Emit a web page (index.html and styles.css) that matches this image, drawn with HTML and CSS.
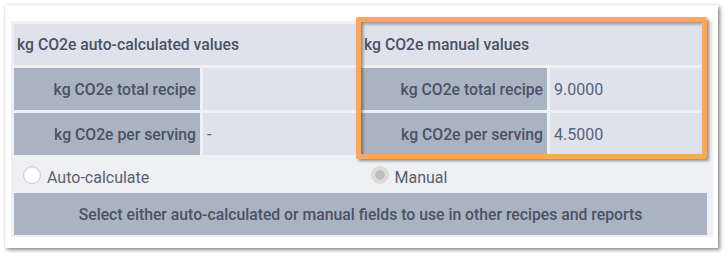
FILE: index.html
```html
<!DOCTYPE html>
<html lang="en">
<head>
    <meta charset="UTF-8">
    <meta name="viewport" content="width=device-width, initial-scale=1.0">
    <title>kg CO2e values</title>
<link rel="stylesheet" href="styles.css">
</head>
<body>

    <div class="card">
        <div class="panel">
            <div class="co2-grid">
                <div class="cell head">kg CO2e auto-calculated values</div>
                <div class="cell head">kg CO2e manual values</div>

                <div class="cell label">kg CO2e total recipe</div>
                <div class="cell value"></div>
                <div class="cell label">kg CO2e total recipe</div>
                <div class="cell value">9.0000</div>

                <div class="cell label">kg CO2e per serving</div>
                <div class="cell value">-</div>
                <div class="cell label">kg CO2e per serving</div>
                <div class="cell value">4.5000</div>
            </div>

            <div class="radio-row">
                <label class="radio-opt">
                    <span class="radio"></span>
                    <span class="radio-text">Auto-calculate</span>
                </label>
                <label class="radio-opt manual">
                    <span class="radio checked"></span>
                    <span class="radio-text">Manual</span>
                </label>
            </div>

            <div class="note-bar">Select either auto-calculated or manual fields to use in other recipes and reports</div>
        </div>

        <!-- highlight round the manual values -->
        <div class="highlight"></div>
    </div>

</body>
</html>
```

FILE: styles.css
```css
/* Reset */
* {
    padding: 0;
    margin: 0;
    box-sizing: border-box;
}

body {
    font-family: Roboto, "Liberation Sans", Arial, sans-serif;
    background-color: #fff;
    color: #4b5264;
}

/* White card with drop shadow */
.card {
    position: relative;
    margin: 5px;
    width: 713px;
    height: 243px;
    padding: 16px 5px 0 6px;
    background-color: #fff;
    box-shadow: 2px 2px 4px rgba(0, 0, 0, 0.45), 0 0 2px rgba(0, 0, 0, 0.12);
}

.panel {
    width: 702px;
    height: 216px;
    padding: 3px 6px 2px 3px;
    background-color: #eff0f4;
}

/* Value table */
.co2-grid {
    display: grid;
    grid-template-columns: 186px 155px 186px 157px;
    grid-template-rows: 41px 42px 42px;
    gap: 3px;
}

.cell {
    display: flex;
    align-items: center;
    font-size: 15.75px;
}

.head {
    grid-column: span 2;
    padding-left: 3px;
    font-weight: 500;
    background-color: #dfe2ea;
}

.label {
    justify-content: flex-end;
    padding-right: 4px;
    font-weight: 500;
    background-color: #aab3c2;
}

.value {
    padding-left: 4px;
    font-size: 16px;
    color: #56617a;
    background-color: #dfe2ea;
}

/* Radio buttons */
.radio-row {
    display: flex;
    height: 38px;
    align-items: center;
}

.radio-opt {
    display: flex;
    align-items: center;
    gap: 6px;
    width: 347px;
    padding-left: 9px;
    padding-top: 2px;
    font-size: 16px;
    color: #59606e;
}

.radio-opt.manual {
    padding-left: 10px;
}

.radio-text {
    padding-top: 5px;
}

.radio {
    width: 18px;
    height: 18px;
    border-radius: 50%;
    border: 1px solid #c9cbd0;
    background-color: #fff;
    box-shadow: inset 0 1px 2px rgba(0, 0, 0, 0.08);
}

.radio.checked {
    border: 3px solid #dcdcdc;
    background-color: #bdbdbd;
    box-shadow: inset 0 0 0 1px #ebebeb;
}

/* Bottom note */
.note-bar {
    display: flex;
    align-items: center;
    justify-content: center;
    height: 42px;
    font-size: 15.75px;
    font-weight: 500;
    background-color: #aab3c2;
}

/* Orange annotation box */
.highlight {
    position: absolute;
    left: 351px;
    top: 12px;
    width: 351px;
    height: 142px;
    border: 5px solid #f9a85e;
    border-radius: 2px;
    filter: drop-shadow(2px 2px 1.5px rgba(60, 60, 60, 0.55));
}
```
